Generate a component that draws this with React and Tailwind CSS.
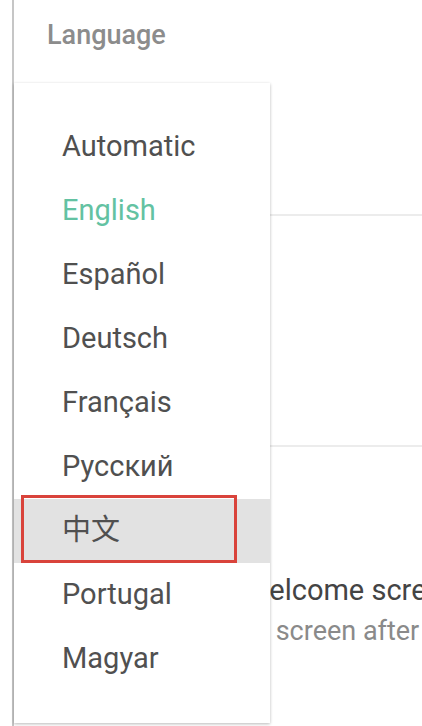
const languages = [
  "Automatic",
  "English",
  "Español",
  "Deutsch",
  "Français",
  "Русский",
  "中文",
  "Portugal",
  "Magyar",
];

function LanguageMenu({ selected, highlighted }) {
  return (
    <div className="absolute left-[14px] top-[83px] w-[256px] bg-white py-8 shadow-[0_1px_3px_rgba(0,0,0,0.28)]">
      {languages.map((lang) => {
        const isSelected = lang === selected;
        const isHighlighted = lang === highlighted;
        return (
          <div
            key={lang}
            className={`relative flex h-16 items-center pl-[48px] text-[29px] ${
              isHighlighted ? "bg-[#e2e2e2]" : ""
            } ${isSelected ? "text-[#63c2a2]" : "text-[#505050]"}`}
          >
            {isHighlighted ? (
              <div className="absolute -top-[4px] left-[7px] h-[68px] w-[216px] border-[3px] border-[#d9433b]" />
            ) : null}
            <span className="relative">{lang}</span>
          </div>
        );
      })}
    </div>
  );
}

export default function App() {
  return (
    <div
      className="relative h-[726px] w-[422px] overflow-hidden bg-white"
      style={{ fontFamily: "Roboto, 'Noto Sans CJK SC', sans-serif" }}
    >
      <div className="ml-[12px] flex h-full flex-col border-l-2 border-[#c6c6c6]">
        <div className="flex h-[70px] items-center pl-[33px] text-[27px] font-medium text-[#8c8c8c]">
          Language
        </div>
        <div className="h-[146px] border-b-2 border-[#ececec]" />
        <div className="h-[231px] border-b-2 border-[#ececec]" />
        <div className="flex flex-col pt-[125px]">
          <div className="ml-[230px] whitespace-nowrap text-[29px] leading-[36px] text-[#444444]">Welcome screen</div>
          <div className="ml-[73px] mt-[6px] whitespace-nowrap text-[27px] leading-[34px] text-[#8a8a8a]">
            Show welcome screen after update
          </div>
        </div>
      </div>
      <LanguageMenu selected="English" highlighted="中文" />
    </div>
  );
}
